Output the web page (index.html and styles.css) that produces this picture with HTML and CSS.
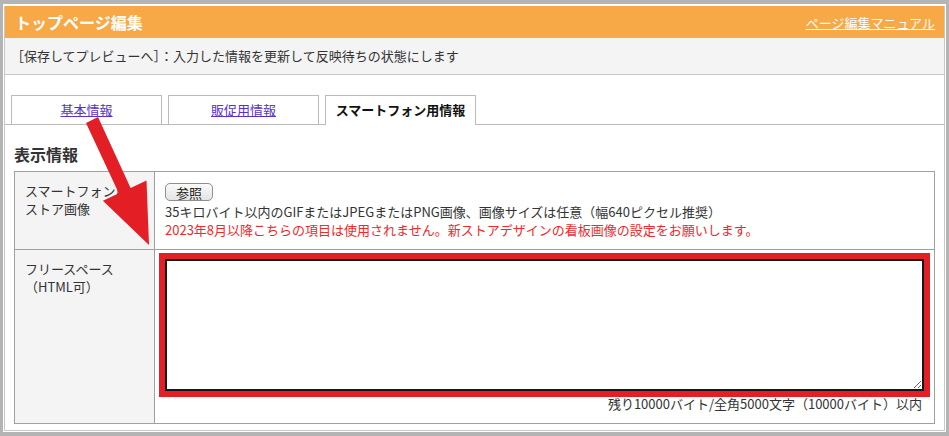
FILE: index.html
```html
<!DOCTYPE html>
<html lang="ja">
<head>
    <meta charset="UTF-8">
    <meta name="viewport" content="width=device-width, initial-scale=1.0">
    <title>トップページ編集</title>
    <link rel="stylesheet" href="styles.css">
</head>
<body>
    <div class="frame">
        <div class="panel">
            <div class="head">
                <h1>トップページ編集</h1>
                <a href="#">ページ編集マニュアル</a>
            </div>
            <p class="notice">［保存してプレビューへ］：入力した情報を更新して反映待ちの状態にします</p>
            <ul class="tabs">
                <li><a href="#">基本情報</a></li>
                <li><a href="#">販促用情報</a></li>
                <li class="active">スマートフォン用情報</li>
            </ul>
            <div class="content">
                <h2>表示情報</h2>
                <table class="form">
                    <tr>
                        <th>スマートフォン用<br>ストア画像</th>
                        <td>
                            <button class="browse">参照</button>
                            35キロバイト以内のGIFまたはJPEGまたはPNG画像、画像サイズは任意（幅640ピクセル推奨）<br>
                            <span class="warn">2023年8月以降こちらの項目は使用されません。新ストアデザインの看板画像の設定をお願いします。</span>
                        </td>
                    </tr>
                    <tr>
                        <th>フリースペース<br>（HTML可）</th>
                        <td>
                            <textarea class="free"></textarea>
                            <div class="count">残り10000バイト/全角5000文字（10000バイト）以内</div>
                        </td>
                    </tr>
                </table>
            </div>
        </div>
    </div>
    <!-- 注釈の矢印 -->
    <svg class="arrow" width="949" height="436" viewBox="0 0 949 436">
        <polygon points="86,123 98,117 130.6,187.9 146.5,180.5 149,245 102.9,200.7 118.8,193.3" fill="#e31e24"/>
    </svg>
</body>
</html>
```

FILE: styles.css
```css
html, body{
    margin: 0;
    height: 436px;
    overflow: hidden;
}
body{
    position: relative;
    background: #b4b4b4;
    font-family: "Noto Sans CJK JP", sans-serif;
    font-size: 13px;
    color: #333;
}
.frame{
    margin: 4px 3px 0 3px;
    height: 428px;
    padding: 2px 1px 0 1px;
    box-sizing: border-box;
    background: #fff;
}
.panel{
    border: 1px solid #c8c8c8;
    border-top: none;
    height: 425px;
    box-sizing: border-box;
}
.head{
    display: flex;
    justify-content: space-between;
    align-items: center;
    height: 32px;
    padding: 0 9px 0 10px;
    background: #f7a847;
}
.head h1{
    margin: 0;
    font-size: 16px;
    font-weight: bold;
    color: #fff;
}
.head a{
    color: #fff;
    font-size: 13px;
}
.notice{
    margin: 0;
    height: 36px;
    line-height: 36px;
    padding: 0 6px;
    background: #f4f4f4;
    border-bottom: 1px solid #c8c8c8;
}
.tabs{
    display: flex;
    gap: 6px;
    list-style: none;
    margin: 20px 0 0;
    padding: 0 0 0 6px;
    border-bottom: 1px solid #bbb;
}
.tabs li{
    width: 151px;
    height: 29px;
    box-sizing: border-box;
    border: 1px solid #bbb;
    border-bottom: none;
    text-align: center;
    line-height: 28px;
}
.tabs a{
    color: #5a31cc;
}
.tabs .active{
    height: 30px;
    margin-bottom: -1px;
    background: #fff;
    font-weight: bold;
    color: #111;
}
.content{
    padding: 0 9px;
}
.content h2{
    margin: 18px 0 6px;
    font-size: 16px;
    line-height: 22px;
    font-weight: bold;
}
.form{
    width: 100%;
    border-collapse: collapse;
    border: 1px solid #a0a0a0;
}
.form th, .form td{
    border: 1px solid #a0a0a0;
    padding: 10px;
    vertical-align: top;
    line-height: 18px;
    text-align: left;
}
.form th{
    width: 119px;
    background: #f4f4f4;
    font-weight: normal;
}
.browse{
    display: block;
    width: 48px;
    height: 18px;
    margin: 1px 0 2px;
    padding: 0;
    border: 1px solid #8f8f8f;
    border-radius: 5px;
    background: linear-gradient(#fbfbfb, #e4e4e4);
    font-family: inherit;
    font-size: 13px;
    line-height: 15px;
    color: #222;
}
.warn{
    color: #f2282a;
}
.free{
    display: block;
    width: 100%;
    height: 132px;
    margin-top: -1px;
    box-sizing: border-box;
    border: 2px solid #161616;
    outline: 6px solid #e31e24;
    resize: vertical;
}
.count{
    margin-top: 4px;
    padding-right: 2px;
    text-align: right;
}
.arrow{
    position: absolute;
    left: 0;
    top: 0;
    pointer-events: none;
}
```
